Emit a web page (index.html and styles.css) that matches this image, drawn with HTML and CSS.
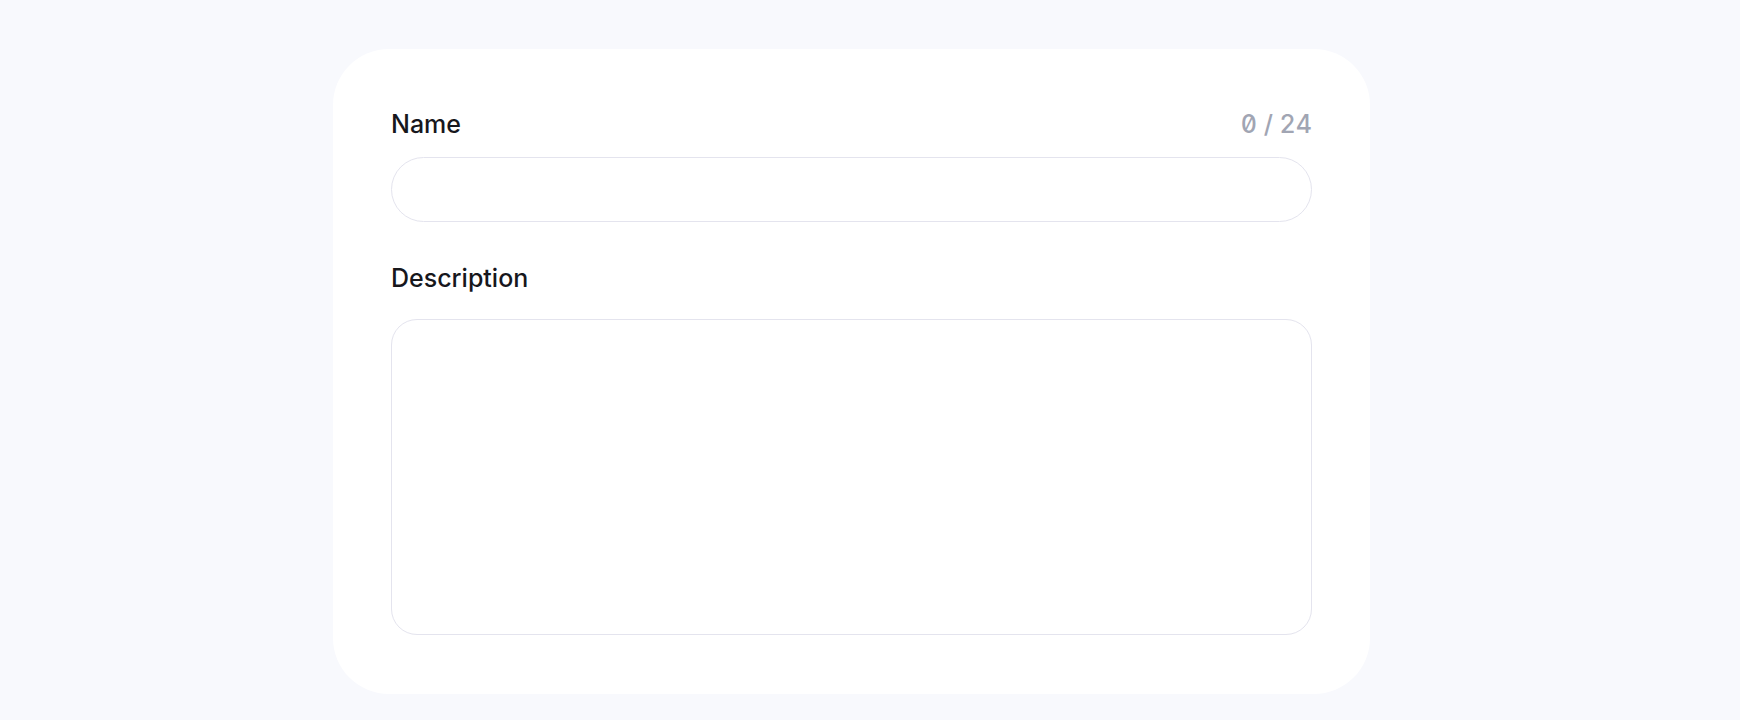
FILE: index.html
```html
<!DOCTYPE html>
<html lang="en">
<head>
<meta charset="utf-8">
<title>Form</title>
<link rel="stylesheet" href="styles.css">
</head>
<body>
<div class="card">
  <div class="label-row">
    <label class="label" for="name">Name</label>
    <span class="counter">0 / 24</span>
  </div>
  <input class="input" id="name" type="text">
  <label class="label label-desc" for="desc">Description</label>
  <textarea class="textarea" id="desc"></textarea>
</div>
</body>
</html>
```
FILE: styles.css
```css
html, body {
  margin: 0;
  padding: 0;
  background: #f8f9fd;
  font-family: Inter, "Noto Sans", sans-serif;
}
body {
  padding-top: 49px;
  padding-left: 333px;
}
.card {
  box-sizing: border-box;
  width: 1037px;
  background: #ffffff;
  border-radius: 56px;
  padding: 59px 58px 59px 58px;
  display: flex;
  flex-direction: column;
}
.label-row {
  display: flex;
  justify-content: space-between;
  align-items: center;
  height: 32px;
  margin-bottom: 17px;
}
.label {
  display: block;
  font-size: 25px;
  line-height: 32px;
  font-weight: 500;
  color: #17171c;
}
.counter {
  font-size: 25px;
  line-height: 32px;
  font-weight: 500;
  color: #a1a5b3;
  font-variant-numeric: tabular-nums slashed-zero;
  font-feature-settings: "zero" 1, "tnum" 1;
}
.input {
  box-sizing: border-box;
  display: block;
  width: 100%;
  height: 65px;
  margin: 0;
  border: 1px solid #e4e4ee;
  border-radius: 33px;
  background: #fff;
  outline: none;
  padding: 0 24px;
  font-family: inherit;
  font-size: 20px;
}
.label-desc {
  margin-top: 40px;
  margin-bottom: 25px;
}
.textarea {
  box-sizing: border-box;
  display: block;
  width: 100%;
  height: 316px;
  margin: 0;
  border: 1px solid #e4e4ee;
  border-radius: 26px;
  background: #fff;
  outline: none;
  resize: none;
  padding: 20px 24px;
  font-family: inherit;
  font-size: 20px;
}
```
